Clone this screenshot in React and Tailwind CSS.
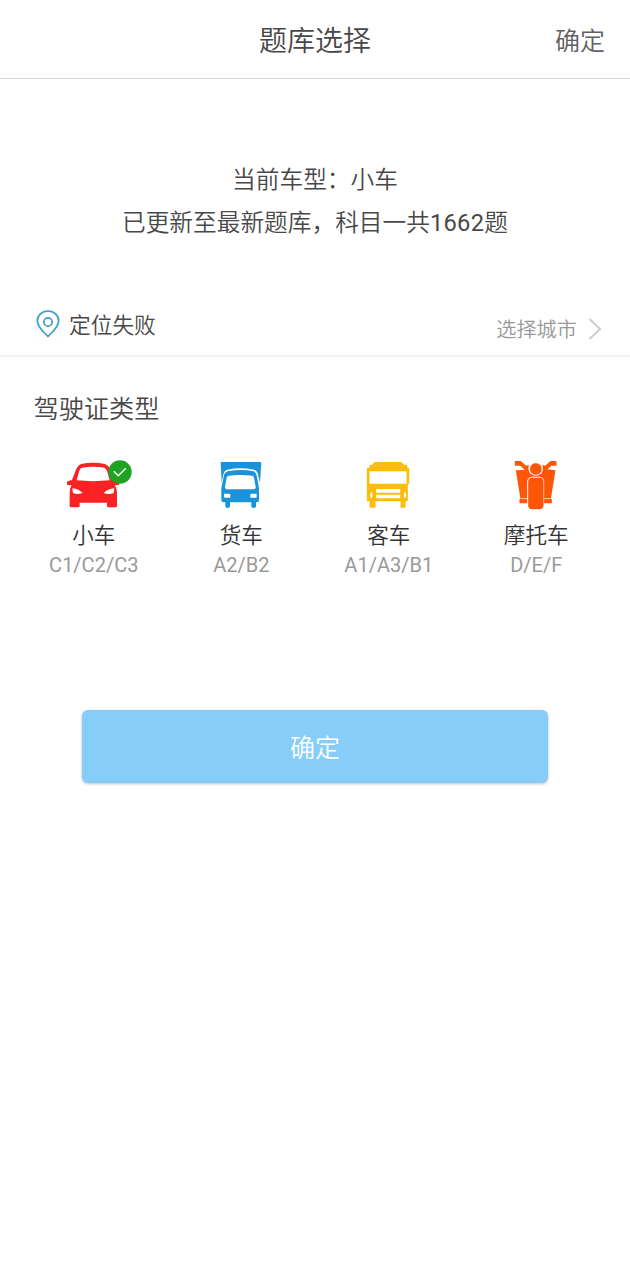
import { useState } from 'react'

function CarIcon() {
  return (
    <svg viewBox="-11 0 225 210" className="w-[75px] h-[70px] overflow-visible">
      <path
        fill="#fb2226"
        fillRule="evenodd"
        d="M64 42 Q100 34 136 42 Q146 45 151 56 L164 90 L177 94 Q180 100 178 105 L165 106 Q172 114 172 126 V168 Q172 172 168 172 H146 Q142 172 142 168 V158 H60 V168 Q60 172 56 172 H34 Q30 172 30 168 V126 Q30 114 36 106 L23 105 Q20 100 23 94 L37 90 L50 56 Q55 45 64 42 Z M66 53 Q61 56 59 62 L51 91 Q100 96 150 91 L142 62 Q139 56 134 53 Q100 48 66 53 Z M38 115 Q58 117 69 129 Q53 135 40 129 Z M164 115 Q143 117 132 129 Q148 135 162 129 Z"
      />
    </svg>
  )
}

function TruckIcon() {
  return (
    <svg viewBox="-2 0 225 210" className="w-[75px] h-[70px]">
      <path fill="#1b93da" d="M50 36 H166 Q170 36 170 40 L166 98 L161 78 Q159 62 148 59 Q108 51 68 59 Q57 62 55 78 L51 98 L48 40 Q48 36 50 36 Z" />
      <path
        fill="#1b93da"
        fillRule="evenodd"
        d="M70 64 Q108 56 146 64 Q155 67 157 80 L163 115 V151 Q163 157 157 157 H154 V169 Q154 174 147 174 Q140 174 140 169 V157 H76 V169 Q76 174 69 174 Q62 174 62 169 V157 H57 Q50 157 50 151 V115 L57 80 Q59 67 70 64 Z M72 77 Q67 78 66 83 L61 110 Q61 118 69 118 H146 Q154 118 153 110 L148 83 Q147 78 143 77 Q108 73 72 77 Z M58 131 V141 Q58 143 60 143 H77 V134 Q77 131 74 131 Z M137 134 V143 H154 Q156 143 156 141 V131 H140 Q137 131 137 134 Z"
      />
    </svg>
  )
}

function BusIcon() {
  return (
    <svg viewBox="3.4 0 225 210" className="w-[75px] h-[70px]">
      <path
        fill="#fbbc0b"
        fillRule="evenodd"
        d="M74 36 H154 L163 44 H172 V53 H178 V101 H174 V151 Q174 154 171 154 H167 V171 Q167 173 165 173 H152 V154 H77 V173 H62 Q59 173 59 171 V154 H54 Q51 154 51 151 V53 H59 V44 H67 Z M59 64 V101 H170 V64 Z M79 117 V128 H151 V117 Z M79 134 V145 H151 V134 Z M63 127 Q58 136 63 144 H66 Q71 136 66 127 Z M164 127 Q159 136 164 144 H167 Q172 136 167 127 Z"
      />
    </svg>
  )
}

function MotorcycleIcon() {
  return (
    <svg viewBox="-4.5 0 225 210" className="w-[75px] h-[70px]">
      <g fill="#fc5606">
        <path d="M43 33 H61 L77 47 L85 44 Q82 55 85 63 L90 72 H122 Q128 62 127 55 L126 44 L134 47 L150 33 H168 V47 H153 L141 58 L165 61 L151 147 H154 V160 H131 V93 Q129 81 117 80 H94 Q82 82 80 93 V160 H57 V147 H60 L46 61 L73 59 L59 47 H43 Z" />
        <rect x="83" y="83" width="46" height="95" rx="12" />
      </g>
      <circle cx="106" cy="57" r="19" fill="#fc5606" stroke="#fff" strokeWidth="3" />
      <path d="M62 146 H80 M131 146 H151" stroke="#fff" strokeWidth="2" />
    </svg>
  )
}

function CheckBadge() {
  return (
    <svg viewBox="0 0 24 24" className="absolute left-[52px] top-2.5 w-6 h-6">
      <circle cx="12" cy="12" r="11.7" fill="#1fa325" />
      <path d="M5.8 11.2 L10.3 15.8 L17.8 8.2" fill="none" stroke="#fff" strokeWidth="1.5" />
    </svg>
  )
}

const LICENSE_TYPES = [
  { key: 'car', label: '小车', codes: 'C1/C2/C3', Icon: CarIcon },
  { key: 'truck', label: '货车', codes: 'A2/B2', Icon: TruckIcon },
  { key: 'bus', label: '客车', codes: 'A1/A3/B1', Icon: BusIcon },
  { key: 'motorcycle', label: '摩托车', codes: 'D/E/F', Icon: MotorcycleIcon },
]

export default function App() {
  const [selected, setSelected] = useState('car')
  const current = LICENSE_TYPES.find((t) => t.key === selected)

  return (
    <div className="w-[630px] h-[1280px] bg-white text-[#484848] font-[350] font-['Roboto','Noto_Sans_CJK_SC',sans-serif]">
      {/* Header */}
      <header className="grid grid-cols-[1fr_auto_1fr] items-center h-[79px] px-[25px] pt-1.5 border-b border-[#d9d9d9]">
        <span />
        <h1 className="text-[28px] leading-[40px]">题库选择</h1>
        <button className="justify-self-end text-[25px] leading-[40px] text-[#606060]">确定</button>
      </header>

      {/* Current question bank */}
      <div className="h-[215px] pt-[79.5px] text-center text-[23.7px] leading-[43px]">
        <p>当前车型：{current.label}</p>
        <p>
          已更新至最新题库，科目一共<span className="font-normal tracking-[0.3px]">1662</span>题
        </p>
      </div>

      {/* Location */}
      <div className="flex justify-between h-[63px] pl-9 pr-7 border-b-2 border-[#f3f3f3]">
        <div className="flex items-center gap-[9px] text-[21.7px]">
          <svg viewBox="0 0 24 28" className="w-6 h-7 mb-px" fill="none" stroke="#3a9fc8" strokeWidth="1.7">
            <path d="M12 26.5 C9 23 1.3 17.5 1.3 11 A10.7 10 0 0 1 22.7 11 C22.7 17.5 15 23 12 26.5 Z" strokeLinejoin="round" />
            <circle cx="12" cy="12" r="4.2" />
          </svg>
          <span className="pt-1">定位失败</span>
        </div>
        <button className="flex items-center gap-[11px] pt-2 text-[20.2px] text-[#999]">
          <span className="pt-[3px]">选择城市</span>
          <svg viewBox="0 0 14 22" className="w-3.5 h-[22px]" fill="none" stroke="#ccc" strokeWidth="2">
            <path d="M1.5 1 L12 11 L1.5 21" />
          </svg>
        </button>
      </div>

      {/* License types */}
      <h2 className="pt-[33px] pl-[33.5px] text-[25.2px] leading-[40px]">驾驶证类型</h2>
      <div className="grid grid-cols-4 mx-5 mt-5">
        {LICENSE_TYPES.map(({ key, label, codes, Icon }) => (
          <button key={key} type="button" onClick={() => setSelected(key)} className="flex flex-col items-center">
            <span className="relative block">
              <Icon />
              {selected === key && <CheckBadge />}
            </span>
            <span className="mt-px text-[21.6px] leading-[30px] text-[#333]">{label}</span>
            <span className="text-[20px] leading-[29px] font-normal text-[#999]">{codes}</span>
          </button>
        ))}
      </div>

      {/* Confirm */}
      <button className="block w-[466px] h-[73px] mx-auto mt-[130px] pt-1 rounded-md bg-[#87cdfa] text-white text-[25px] shadow-[0_1px_3px_rgba(0,0,0,0.25)]">
        确定
      </button>
    </div>
  )
}
